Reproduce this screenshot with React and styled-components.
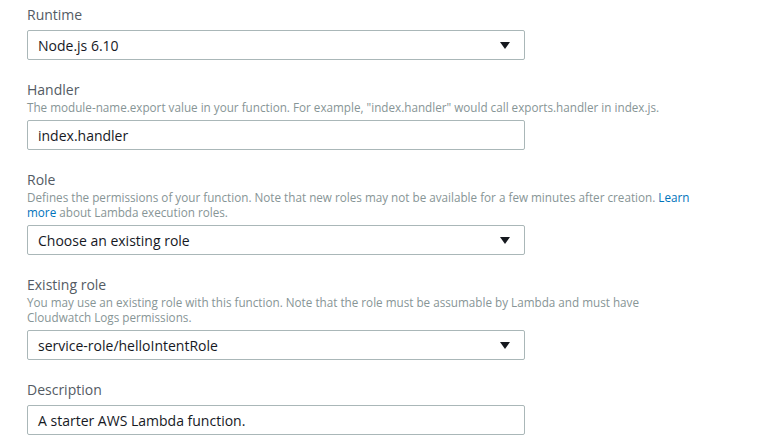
import React from "react";
import styled, { createGlobalStyle } from "styled-components";

const Global = createGlobalStyle`
  html, body { margin: 0; padding: 0; background: #ffffff; }
  body { font-family: "Open Sans", Lato, sans-serif; }
`;

const Form = styled.div`
  display: flex;
  flex-direction: column;
  gap: 20px;
  padding: 5px 0 0 27px;
`;

const Field = styled.div`
  display: flex;
  flex-direction: column;
`;

const Label = styled.div`
  font-size: 14px;
  line-height: 20px;
  color: #545b64;
`;

const Help = styled.div`
  font-size: 11.7px;
  line-height: 15px;
  color: #879596;
  max-width: 672px;
`;

const Link = styled.a`
  color: #0073bb;
  text-decoration: none;
`;

const Control = styled.div`
  box-sizing: border-box;
  margin-top: 5px;
  width: 498px;
  height: 30px;
  border: 1px solid #aab7b8;
  border-radius: 2px;
  display: flex;
  align-items: center;
  justify-content: space-between;
  padding: 0 14px 0 10px;
  font-size: 14px;
  color: #16191f;
  background: #fff;
`;

const Caret = styled.span`
  width: 0;
  height: 0;
  border-left: 5px solid transparent;
  border-right: 5px solid transparent;
  border-top: 7px solid #16191f;
`;

const fields = [
  { label: "Runtime", value: "Node.js 6.10", select: true },
  {
    label: "Handler",
    help: 'The module-name.export value in your function. For example, "index.handler" would call exports.handler in index.js.',
    value: "index.handler",
  },
  {
    label: "Role",
    help: (
      <>
        Defines the permissions of your function. Note that new roles may not be available for a few minutes after creation.{" "}
        <Link>Learn</Link> <Link>more</Link> about Lambda execution roles.
      </>
    ),
    value: "Choose an existing role",
    select: true,
  },
  {
    label: "Existing role",
    help: "You may use an existing role with this function. Note that the role must be assumable by Lambda and must have Cloudwatch Logs permissions.",
    value: "service-role/helloIntentRole",
    select: true,
  },
  { label: "Description", value: "A starter AWS Lambda function." },
];

export default function App() {
  return (
    <>
      <Global />
      <Form>
        {fields.map((f) => (
          <Field key={f.label}>
            <Label>{f.label}</Label>
            {f.help && <Help>{f.help}</Help>}
            <Control>
              <span>{f.value}</span>
              {f.select && <Caret />}
            </Control>
          </Field>
        ))}
      </Form>
    </>
  );
}
